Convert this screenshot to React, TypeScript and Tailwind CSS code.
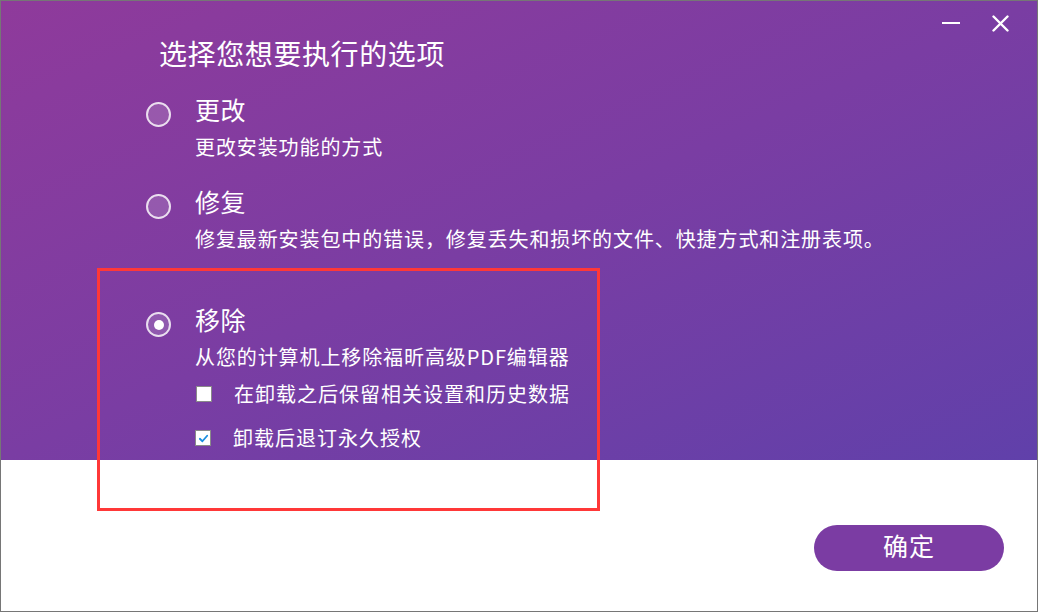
// Uninstall / modify options dialog
function Radio({ checked }: { checked?: boolean }) {
  return (
    <span className="mt-[9px] flex h-[25px] w-[25px] shrink-0 items-center justify-center rounded-full border-2 border-white/80 bg-white/15">
      {checked && <span className="h-[10px] w-[10px] rounded-full bg-white" />}
    </span>
  )
}

function Checkbox({ checked }: { checked?: boolean }) {
  return (
    <span className="flex h-[16px] w-[16px] shrink-0 items-center justify-center border border-[#8a8a8a] bg-white">
      {checked && (
        <svg viewBox="0 0 12 12" className="h-[11px] w-[11px]">
          <path d="M2 6.3 L4.8 9 L10 3" fill="none" stroke="#1a8ee0" strokeWidth="2" strokeLinecap="round" strokeLinejoin="round" />
        </svg>
      )}
    </span>
  )
}

function Option({
  label,
  desc,
  checked,
  top,
  children,
}: {
  label: string
  desc: string
  checked?: boolean
  top: string
  children?: React.ReactNode
}) {
  return (
    <div className={top}>
      <div className="flex items-start gap-[24px]">
        <Radio checked={checked} />
        <span className="text-[25px] leading-[32px] tracking-[0.5px]">{label}</span>
      </div>
      <div className="mt-[6px] pl-[49px] text-[20px] leading-[28px] tracking-[0.9px]">{desc}</div>
      {children}
    </div>
  )
}

export default function App() {
  return (
    <div className="relative h-[612px] w-[1038px] overflow-hidden border border-[#767676] bg-white font-['Noto_Sans_CJK_SC',sans-serif] text-white">
      <div className="h-[459px] bg-linear-to-br from-[#8f3a9b] via-[#7a3da3] to-[#6040aa] pt-[13px]">
        <div className="flex h-[18px] items-center justify-end gap-[32px] pr-[28px]">
          <span className="h-[2px] w-[18px] bg-white" />
          <svg viewBox="0 0 17 17" className="h-[17px] w-[17px]">
            <path d="M1.5 1.5 L15.5 15.5 M15.5 1.5 L1.5 15.5" stroke="white" strokeWidth="2.4" strokeLinecap="round" />
          </svg>
        </div>

        <h1 className="mt-[3px] pl-[158px] text-[28px] font-normal leading-[36px] tracking-[0.6px]">选择您想要执行的选项</h1>

        <div className="pl-[145px]">
          <Option top="mt-[22px]" label="更改" desc="更改安装功能的方式" />
          <Option
            top="mt-[24px]"
            label="修复"
            desc="修复最新安装包中的错误，修复丢失和损坏的文件、快捷方式和注册表项。"
          />
          <Option top="mt-[50px]" label="移除" desc="从您的计算机上移除福昕高级PDF编辑器" checked>
            <div className="mt-[9px] flex items-center gap-[22px] pl-[50px] text-[20px] leading-[28px] tracking-[1px]">
              <Checkbox />
              <span>在卸载之后保留相关设置和历史数据</span>
            </div>
            <div className="mt-[16px] flex items-center gap-[22px] pl-[49px] text-[20px] leading-[28px] tracking-[1px]">
              <Checkbox checked />
              <span>卸载后退订永久授权</span>
            </div>
          </Option>
        </div>
      </div>

      <div className="flex justify-end pr-[33px] pt-[65px]">
        <button className="flex h-[46px] w-[190px] items-center justify-center rounded-full bg-[#7b3ca3] pb-[6px] text-[25px] leading-none tracking-[1px] text-white">
          确定
        </button>
      </div>

      {/* highlight frame */}
      <div className="pointer-events-none absolute left-[96px] top-[267px] h-[243px] w-[503px] border-[3px] border-[#ff3838]" />
    </div>
  )
}
